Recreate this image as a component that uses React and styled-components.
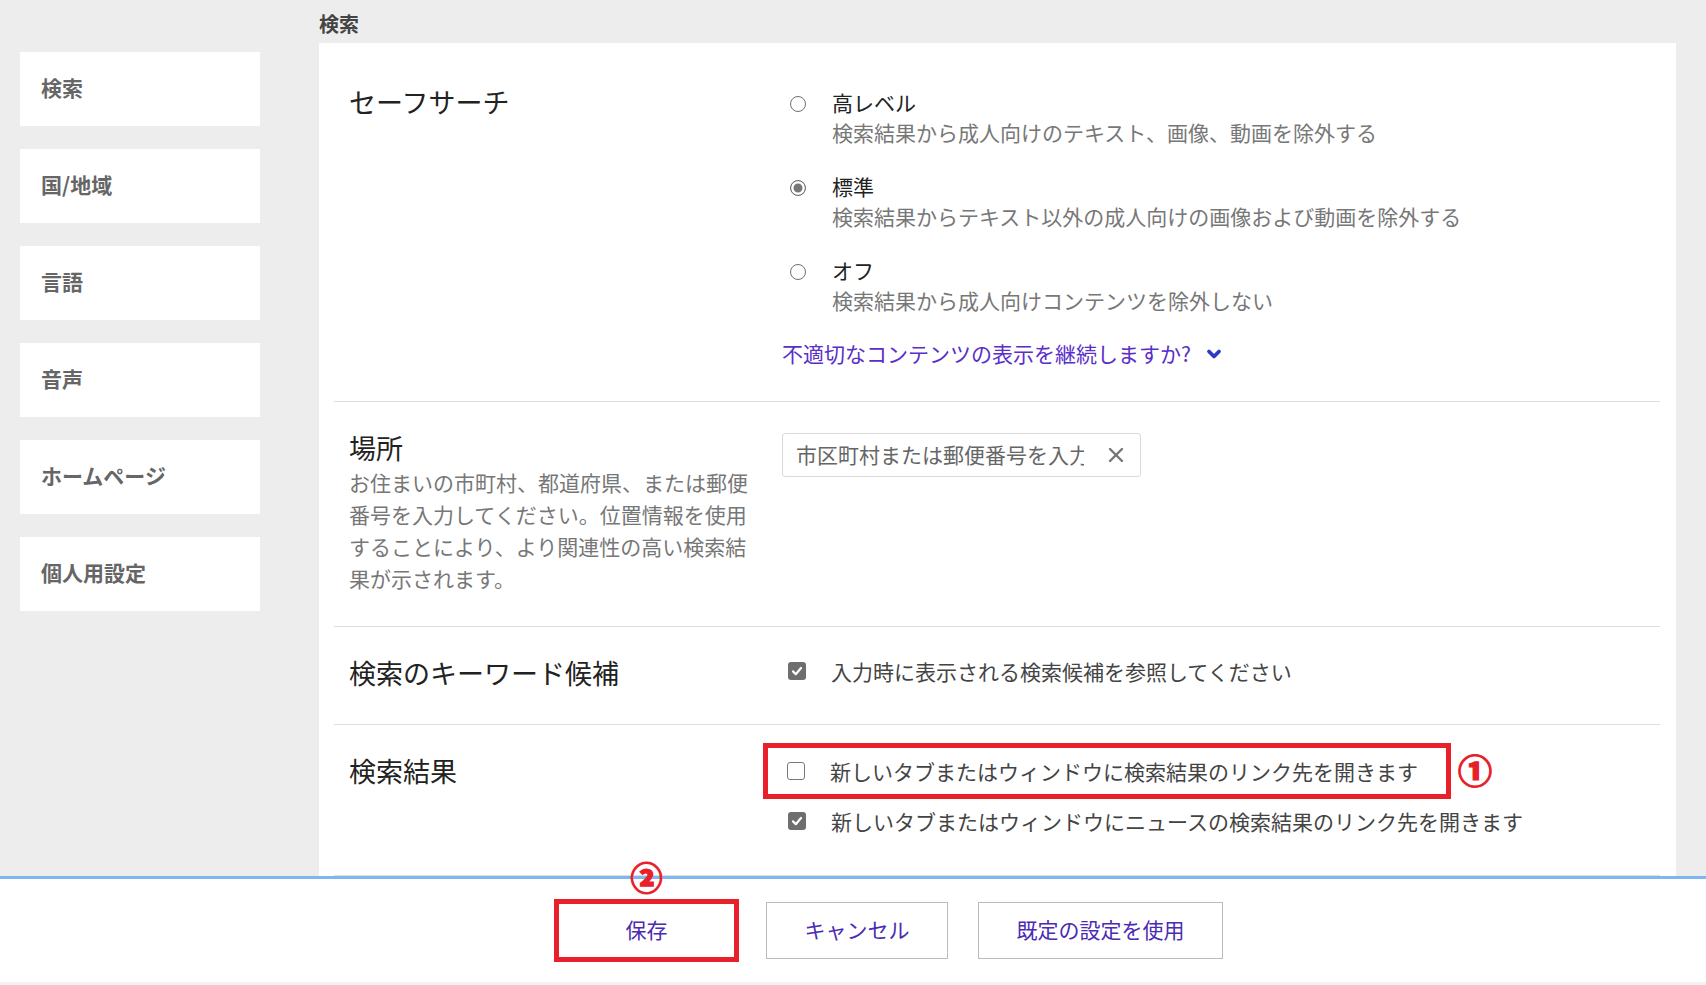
import React from "react";
import styled, { createGlobalStyle } from "styled-components";
import { ChevronDown, X } from "lucide-react";

const GlobalStyle = createGlobalStyle`
  html, body { margin: 0; padding: 0; background: #ededed; }
  body { font-family: "Noto Sans CJK JP", "Noto Sans", sans-serif; }
  * { box-sizing: border-box; }
`;

const Page = styled.div`
  width: 1706px;
  height: 985px;
  display: flex;
  flex-direction: column;
  background: #ededed;
  overflow: hidden;
`;

const Top = styled.div`
  display: flex;
  height: 876px;
`;

const Sidebar = styled.nav`
  width: 319px;
  flex: none;
  padding: 52px 0 0 20px;
  display: flex;
  flex-direction: column;
  gap: 23px;
`;

const NavItem = styled.div`
  width: 240px;
  height: 74px;
  background: #fff;
  display: flex;
  align-items: center;
  padding: 0 0 4px 21px;
  font-size: 21px;
  font-weight: 700;
  color: #666;
`;

const Main = styled.main`
  width: 1357px;
  flex: none;
  display: flex;
  flex-direction: column;
`;

const MainTitle = styled.div`
  height: 43px;
  padding-top: 10px;
  line-height: 28px;
  font-size: 20px;
  font-weight: 700;
  color: #444;
`;

const Panel = styled.section`
  flex: 1;
  background: #fff;
  padding: 13px 16px 0 15px;
  display: flex;
  flex-direction: column;
`;

const Row = styled.div`
  display: grid;
  grid-template-columns: 403px 1fr;
  column-gap: 30px;
  padding: 28px 15px ${(p) => p.$pb || 33}px;
  border-top: ${(p) => (p.$first ? "none" : "1px solid #dedede")};
  border-bottom: ${(p) => (p.$last ? "1px solid #dedede" : "none")};
  flex: ${(p) => (p.$last ? 1 : "none")};
`;

const LabelCol = styled.div`
  display: flex;
  flex-direction: column;
`;

const Label = styled.div`
  font-size: 27px;
  line-height: 36px;
  color: #222;
`;

const Desc = styled.div`
  font-size: 21px;
  line-height: 32px;
  color: #777;
`;

const Controls = styled.div`
  padding-top: ${(p) => p.$pt ?? 3}px;
  display: flex;
  flex-direction: column;
  align-items: flex-start;
`;

const RadioList = styled.div`
  display: flex;
  flex-direction: column;
  gap: 24px;
  padding-left: 8px;
`;

const RadioItem = styled.div`
  display: grid;
  grid-template-columns: 16px 1fr;
  column-gap: 26px;
`;

const RadioCircle = styled.span`
  width: 16px;
  height: 16px;
  margin-top: 9px;
  border-radius: 50%;
  border: 1.5px solid #707070;
  background: ${(p) => (p.$checked ? "#777" : "#fff")};
  box-shadow: ${(p) => (p.$checked ? "inset 0 0 0 2.5px #fff" : "none")};
`;

const OptTitle = styled.div`
  font-size: 21px;
  line-height: 30px;
  color: #222;
`;

const OptDesc = styled.div`
  font-size: 21px;
  line-height: 30px;
  color: #777;
`;

const Link = styled.a`
  margin-top: 23px;
  display: flex;
  align-items: center;
  gap: 13px;
  font-size: 21px;
  line-height: 30px;
  color: #5a2fc9;
  text-decoration: none;
  cursor: pointer;
  svg { color: #2b3bc4; margin-top: 2px; }
`;

const InputBox = styled.div`
  margin-top: 0;
  width: 359px;
  height: 44px;
  border: 1px solid #dadada;
  border-radius: 3px;
  display: flex;
  align-items: center;
  padding: 0 12px 3px 13px;
  gap: 20px;
  svg { margin-top: 3px; }
`;

const Placeholder = styled.span`
  flex: 1;
  overflow: hidden;
  white-space: nowrap;
  font-size: 21px;
  color: #666;
`;

const CheckRow = styled.label`
  display: flex;
  align-items: center;
  gap: 25px;
  padding-left: ${(p) => p.$pl ?? 6}px;
  font-size: 21px;
  line-height: 30px;
  color: #444;
  margin-top: ${(p) => p.$mt || 0}px;
`;

const Box = styled.span`
  width: 18px;
  height: 18px;
  flex: none;
  border-radius: 3px;
  display: flex;
  align-items: center;
  justify-content: center;
  background: ${(p) => (p.$checked ? "#6e6e6e" : "#fff")};
  border: ${(p) => (p.$checked ? "none" : "1.5px solid #777")};
`;

const Annotated = styled.div`
  position: relative;
  margin: -13px 0 0 -19px;
  width: 688px;
  border: 5px solid #e8202a;
  padding: 8px 0 8px 19px;
`;

const Mark = styled.span`
  position: absolute;
  font-family: "Noto Sans CJK JP", sans-serif;
  font-weight: 900;
  color: #e8202a;
  line-height: 1;
  -webkit-text-stroke: 1.2px #e8202a;
`;

const Num1 = styled(Mark)`
  left: calc(100% + 12px);
  top: 50%;
  font-size: 34px;
  transform: translateY(-52%);
`;

const Num2 = styled(Mark)`
  left: 50%;
  top: -44px;
  font-size: 32px;
  transform: translateX(-50%);
`;

const Footer = styled.footer`
  flex: 1;
  background: #fff;
  border-top: 3px solid #7fb5f1;
  border-bottom: 3px solid #f2f2f2;
  display: flex;
  align-items: center;
  gap: 27px;
  padding-left: 554px;
  padding-bottom: 1px;
`;

const Button = styled.button`
  position: relative;
  width: ${(p) => p.$w || 182}px;
  height: ${(p) => (p.$annot ? 63 : 57)}px;
  margin-left: ${(p) => p.$ml || 0}px;
  background: #fff;
  border: ${(p) => (p.$annot ? "5px solid #e8202a" : "1px solid #bcbcbc")};
  font-family: inherit;
  font-size: 21px;
  color: #4a2bb3;
  cursor: pointer;
  padding: 0 0 3px;
`;

const CheckIcon = () => (
  <svg width="12" height="12" viewBox="0 0 12 12">
    <path d="M2 6.4 L4.8 9.2 L10 3" fill="none" stroke="#fff" strokeWidth="2.2" strokeLinecap="round" strokeLinejoin="round" />
  </svg>
);

const Checkbox = ({ checked, children, mt }) => (
  <CheckRow $mt={mt}>
    <Box $checked={checked}>{checked && <CheckIcon />}</Box>
    {children}
  </CheckRow>
);

const navItems = ["検索", "国/地域", "言語", "音声", "ホームページ", "個人用設定"];

const options = [
  { t: "高レベル", d: "検索結果から成人向けのテキスト、画像、動画を除外する" },
  { t: "標準", d: "検索結果からテキスト以外の成人向けの画像および動画を除外する", c: true },
  { t: "オフ", d: "検索結果から成人向けコンテンツを除外しない" },
];

export default function App() {
  return (
    <Page>
      <GlobalStyle />
      <Top>
        <Sidebar>
          {navItems.map((n) => (
            <NavItem key={n}>{n}</NavItem>
          ))}
        </Sidebar>
        <Main>
          <MainTitle>検索</MainTitle>
          <Panel>
            <Row $first>
              <LabelCol>
                <Label>セーフサーチ</Label>
              </LabelCol>
              <Controls>
                <RadioList>
                  {options.map((o) => (
                    <RadioItem key={o.t}>
                      <RadioCircle $checked={o.c} />
                      <div>
                        <OptTitle>{o.t}</OptTitle>
                        <OptDesc>{o.d}</OptDesc>
                      </div>
                    </RadioItem>
                  ))}
                </RadioList>
                <Link>
                  不適切なコンテンツの表示を継続しますか?
                  <ChevronDown size={20} strokeWidth={4.5} />
                </Link>
              </Controls>
            </Row>
            <Row $pb={32}>
              <LabelCol>
                <Label>場所</Label>
                <Desc>
                  お住まいの市町村、都道府県、または郵便番号を入力してください。位置情報を使用することにより、より関連性の高い検索結果が示されます。
                </Desc>
              </LabelCol>
              <Controls>
                <InputBox>
                  <Placeholder>市区町村または郵便番号を入力</Placeholder>
                  <X size={24} strokeWidth={2.4} color="#777" />
                </InputBox>
              </Controls>
            </Row>
            <Row>
              <LabelCol>
                <Label>検索のキーワード候補</Label>
              </LabelCol>
              <Controls $pt={1}>
                <Checkbox checked>入力時に表示される検索候補を参照してください</Checkbox>
              </Controls>
            </Row>
            <Row $last $pb={20}>
              <LabelCol>
                <Label>検索結果</Label>
              </LabelCol>
              <Controls>
                <Annotated>
                  <CheckRow $pl={0}>
                    <Box />
                    新しいタブまたはウィンドウに検索結果のリンク先を開きます
                  </CheckRow>
                  <Num1>①</Num1>
                </Annotated>
                <Checkbox checked mt={7}>
                  新しいタブまたはウィンドウにニュースの検索結果のリンク先を開きます
                </Checkbox>
              </Controls>
            </Row>
          </Panel>
        </Main>
      </Top>
      <Footer>
        <Button $annot $w={185}>
          保存
          <Num2>②</Num2>
        </Button>
        <Button>キャンセル</Button>
        <Button $w={245} $ml={3}>既定の設定を使用</Button>
      </Footer>
    </Page>
  );
}
